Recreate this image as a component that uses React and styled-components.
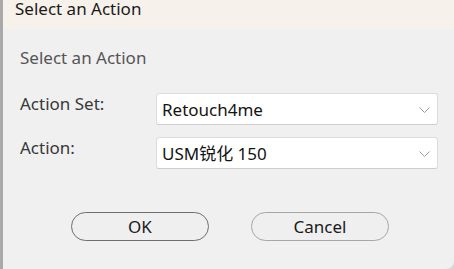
import React from "react";
import styled, { createGlobalStyle } from "styled-components";

const GlobalStyle = createGlobalStyle`
  html, body {
    margin: 0;
    padding: 0;
    background: #d6d6d6;
  }
  body {
    font-family: "Noto Sans", "Noto Sans CJK SC", sans-serif;
  }
`;

const Window = styled.div`
  box-sizing: border-box;
  width: 454px;
  height: 269px;
  display: flex;
  flex-direction: column;
  background: #f0f0f0;
  border-left: 3px solid #a9a9a9;
  border-bottom-right-radius: 8px;
  overflow: hidden;
  font-size: 17px;
`;

const TitleBar = styled.div`
  height: 29px;
  flex: none;
  box-sizing: border-box;
  padding-left: 12px;
  background: #f7f1eb;
  color: #1a1a1a;
  line-height: 17px;
`;

const Body = styled.div`
  padding: 19px 16px 0 17px;
  display: flex;
  flex-direction: column;
`;

const Heading = styled.div`
  color: #555555;
  line-height: 20px;
`;

const Form = styled.div`
  margin-top: 25px;
  display: grid;
  grid-template-columns: 136px 282px;
  row-gap: 12px;
`;

const Label = styled.div`
  color: #383838;
  padding-top: 1px;
  line-height: 20px;
`;

const Select = styled.div`
  box-sizing: border-box;
  height: 32px;
  display: flex;
  align-items: center;
  justify-content: space-between;
  padding: 1px 7px 0 5px;
  background: #ffffff;
  border: 1px solid #dcdcdc;
  border-bottom-color: #cdcdcd;
  border-radius: 3px;
  color: #141414;
`;

const Value = styled.span`
  line-height: 20px;
`;

const Buttons = styled.div`
  margin-top: 43px;
  padding-left: 2px;
  display: flex;
  justify-content: center;
  gap: 42px;
`;

const Button = styled.button`
  box-sizing: border-box;
  width: 138px;
  height: 29px;
  border-radius: 15px;
  border: 1px solid ${(p) => (p.$primary ? "#6e6e6e" : "#a6a6a6")};
  background: #efefef;
  color: #1a1a1a;
  font-family: "Noto Sans", sans-serif;
  font-size: 17px;
  line-height: 20px;
  padding: 0;
`;

const Chevron = () => (
  <svg width="11" height="6" viewBox="0 0 11 6" fill="none">
    <path d="M0.5 0.5 L5.5 5.5 L10.5 0.5" stroke="#9a9a9a" strokeWidth="1" />
  </svg>
);

export default function App() {
  return (
    <>
      <GlobalStyle />
      <Window>
        <TitleBar>Select an Action</TitleBar>
        <Body>
          <Heading>Select an Action</Heading>
          <Form>
            <Label>Action Set:</Label>
            <Select>
              <Value>Retouch4me</Value>
              <Chevron />
            </Select>
            <Label>Action:</Label>
            <Select>
              <Value>USM锐化 150</Value>
              <Chevron />
            </Select>
          </Form>
          <Buttons>
            <Button $primary>OK</Button>
            <Button>Cancel</Button>
          </Buttons>
        </Body>
      </Window>
    </>
  );
}
